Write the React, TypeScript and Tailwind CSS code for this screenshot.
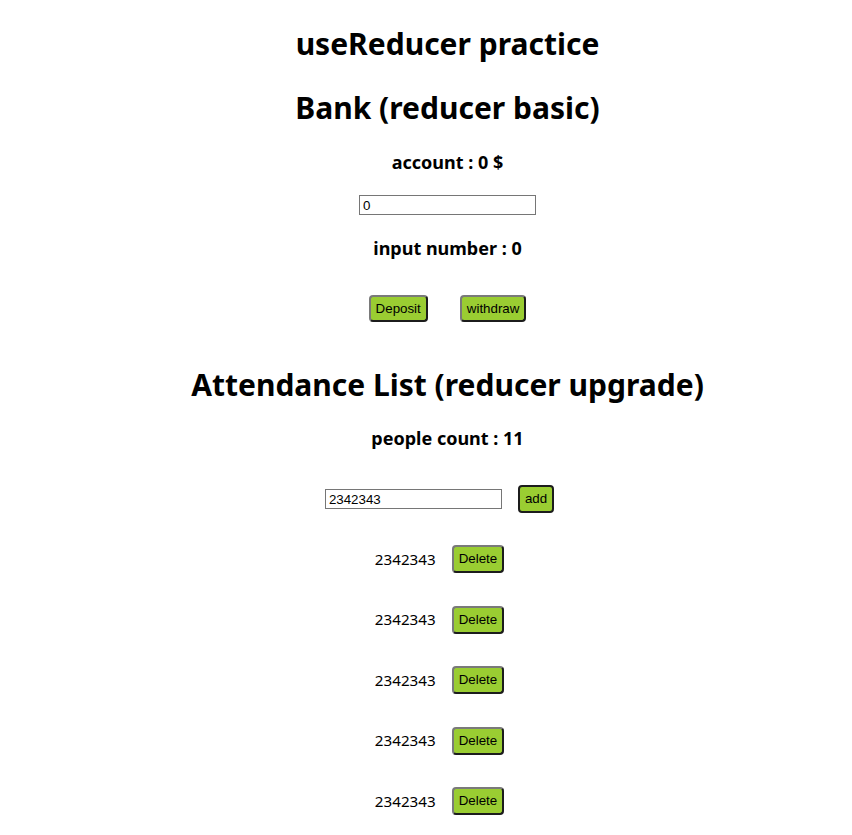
import { useState } from "react"

const btn =
  "h-[27px] px-[5px] mx-4 rounded-[4px] border-2 border-t-[#7a7a7a] border-l-[#7a7a7a] border-r-[#1c1c1c] border-b-[#1c1c1c] bg-[#9acd32] text-[13.33px] text-black font-['Liberation_Sans',Arial,sans-serif]"

const App = () => {
  const [account] = useState(0)
  const [num] = useState("0")
  const [name] = useState("2342343")
  const people = ["2342343", "2342343", "2342343", "2342343", "2342343"]

  return (
    <div className="min-h-[835px] bg-white pl-[43px] text-center text-black font-['Noto_Sans',sans-serif]">
      <h1 className="pt-[22px] h-[66px] flex items-center justify-center text-[30px] font-bold leading-none">
        useReducer practice
      </h1>
      <h1 className="mt-[20px] h-[44px] flex items-center justify-center text-[30px] font-bold leading-none">
        Bank (reducer basic)
      </h1>
      <h3 className="mt-[20px] h-[24px] flex items-center justify-center text-[18px] font-bold leading-none">
        account : {account} $
      </h3>
      <div className="mt-[21px] h-[20px] flex justify-center">
        <input
          value={num}
          readOnly
          className="w-[177px] h-[20px] border border-[#767676] px-[3px] text-[13.33px] font-['Liberation_Sans',Arial,sans-serif] outline-none"
        />
      </div>
      <h3 className="mt-[21px] h-[24px] flex items-center justify-center text-[18px] font-bold leading-none">
        input number : {num}
      </h3>
      <div className="mt-[35px] flex justify-center">
        <button className={btn}>Deposit</button>
        <button className={btn}>withdraw</button>
      </div>
      <h1 className="mt-[41px] h-[44px] flex items-center justify-center text-[30px] font-bold leading-none">
        Attendance List (reducer upgrade)
      </h1>
      <h3 className="mt-[19px] h-[24px] flex items-center justify-center text-[18px] font-bold leading-none">
        people count : 11
      </h3>
      <div className="mt-[35px] h-[28px] flex items-center justify-center">
        <input
          value={name}
          readOnly
          className="w-[177px] h-[20px] border border-[#767676] px-[3px] text-[13.33px] font-['Liberation_Sans',Arial,sans-serif] outline-none"
        />
        <button className="h-[28px] px-[5px] mx-4 rounded-[4px] border-2 border-[#1c1c1c] bg-[#9acd32] text-[13.33px] text-black font-['Liberation_Sans',Arial,sans-serif]">
          add
        </button>
      </div>
      <div className="mt-[32px] flex flex-col gap-[32.5px]">
        {people.map((p, i) => (
          <div key={i} className="h-[28px] flex items-center justify-center">
            <span className="text-[15.2px]">{p}</span>
            <button className={btn + " h-[28px]"}>Delete</button>
          </div>
        ))}
      </div>
    </div>
  )
}

export default App
